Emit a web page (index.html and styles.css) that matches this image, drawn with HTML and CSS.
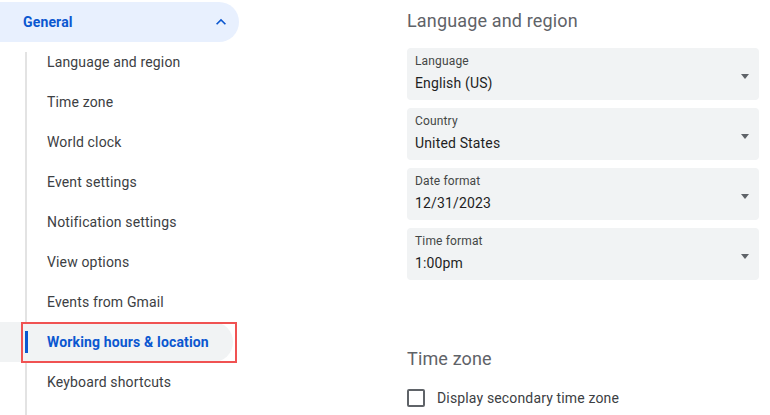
FILE: index.html
```html
<!DOCTYPE html>
<html>
    <head>
        <title>Settings</title>
<link rel="stylesheet" href="styles.css">
    </head>

    <body>
        <div id="page">
            <div id="sidebar">
                <div class="group-header">
                    <span>General</span>
                    <svg class="chevron" width="20" height="20" viewBox="0 0 24 24">
                        <path d="M12 8l-6 6 1.41 1.41L12 10.83l4.59 4.58L18 14z" fill="#0b57d0"/>
                    </svg>
                </div>
                <div class="submenu">
                    <div class="item">Language and region</div>
                    <div class="item">Time zone</div>
                    <div class="item">World clock</div>
                    <div class="item">Event settings</div>
                    <div class="item">Notification settings</div>
                    <div class="item">View options</div>
                    <div class="item">Events from Gmail</div>
                    <div class="item selected">Working hours &amp; location</div>
                    <div class="item">Keyboard shortcuts</div>
                </div>
            </div>

            <div id="main">
                <h2>Language and region</h2>
                <div class="select">
                    <div class="select-text">
                        <div class="select-label">Language</div>
                        <div class="select-value">English (US)</div>
                    </div>
                    <div class="arrow"></div>
                </div>
                <div class="select">
                    <div class="select-text">
                        <div class="select-label">Country</div>
                        <div class="select-value">United States</div>
                    </div>
                    <div class="arrow"></div>
                </div>
                <div class="select">
                    <div class="select-text">
                        <div class="select-label">Date format</div>
                        <div class="select-value">12/31/2023</div>
                    </div>
                    <div class="arrow"></div>
                </div>
                <div class="select">
                    <div class="select-text">
                        <div class="select-label">Time format</div>
                        <div class="select-value">1:00pm</div>
                    </div>
                    <div class="arrow"></div>
                </div>

                <h2 class="section-gap">Time zone</h2>
                <label class="checkbox-row">
                    <span class="checkbox"></span>
                    <span>Display secondary time zone</span>
                </label>
            </div>
        </div>
    </body>
</html>
```

FILE: styles.css
```css
body {
    margin: 0;
    font-family: Roboto, "Liberation Sans", sans-serif;
    background-color: white;
    color: #1f1f1f;
    letter-spacing: 0.15px;
}

#page {
    display: flex;
    height: 415px;
    overflow: hidden;
}

#sidebar {
    width: 240px;
    padding-top: 2px;
    flex-shrink: 0;
    display: flex;
    flex-direction: column;
}

.group-header {
    width: 239px;
    height: 40px;
    box-sizing: border-box;
    padding: 0 8px 0 23px;
    display: flex;
    align-items: center;
    justify-content: space-between;
    background-color: #e8f0fe;
    border-radius: 0 20px 20px 0;
    color: #0b57d0;
    font-size: 14px;
    font-weight: 700;
}

.submenu {
    flex: 1;
    position: relative;
    margin-left: 25px;
    padding-left: 2px;
}

.submenu::before {
    content: "";
    position: absolute;
    left: 0;
    top: 10px;
    bottom: 0;
    width: 2px;
    background-color: #e3e3e3;
}

.item {
    width: 206px;
    height: 40px;
    box-sizing: border-box;
    padding-left: 20px;
    display: flex;
    align-items: center;
    font-size: 14px;
    color: #3c4043;
    border-radius: 0 20px 20px 0;
}

.item.selected {
    position: relative;
    background-color: #f1f3f4;
    color: #0b57d0;
    font-weight: 700;
    box-shadow: -27px 0 0 0 #f1f3f4;
}

/* blue bar on the tree line */
.item.selected::before {
    content: "";
    position: absolute;
    left: -2px;
    top: 9px;
    width: 3px;
    height: 22px;
    background-color: #0b57d0;
}

/* red annotation box */
.item.selected::after {
    content: "";
    position: absolute;
    left: -6px;
    top: 0;
    width: 212px;
    height: 37px;
    border: 2px solid #f05252;
}

#main {
    margin-left: 167px;
    width: 352px;
    padding-top: 9px;
}

h2 {
    margin: 0 0 15px 0;
    font-size: 18px;
    font-weight: 400;
    line-height: 24px;
    color: #5f6368;
}

h2.section-gap {
    margin-top: 67px;
    margin-bottom: 17px;
}

.select {
    height: 52px;
    box-sizing: border-box;
    margin-bottom: 8px;
    padding: 5px 10px 0 8px;
    display: flex;
    justify-content: space-between;
    background-color: #f1f3f4;
    border-radius: 4px;
}

.select-label {
    font-size: 12px;
    line-height: 16px;
    color: #444746;
}

.select-value {
    margin-top: 4px;
    font-size: 14px;
    line-height: 20px;
    color: #1f1f1f;
}

.arrow {
    margin-top: 21px;
    width: 0;
    height: 0;
    border-left: 4px solid transparent;
    border-right: 4px solid transparent;
    border-top: 5px solid #5f6368;
}

.checkbox-row {
    display: flex;
    align-items: center;
    height: 20px;
    font-size: 14px;
    color: #3c4043;
}

.checkbox {
    width: 18px;
    height: 18px;
    box-sizing: border-box;
    border: 2px solid #5f6368;
    border-radius: 2px;
    margin-right: 12px;
}
```
